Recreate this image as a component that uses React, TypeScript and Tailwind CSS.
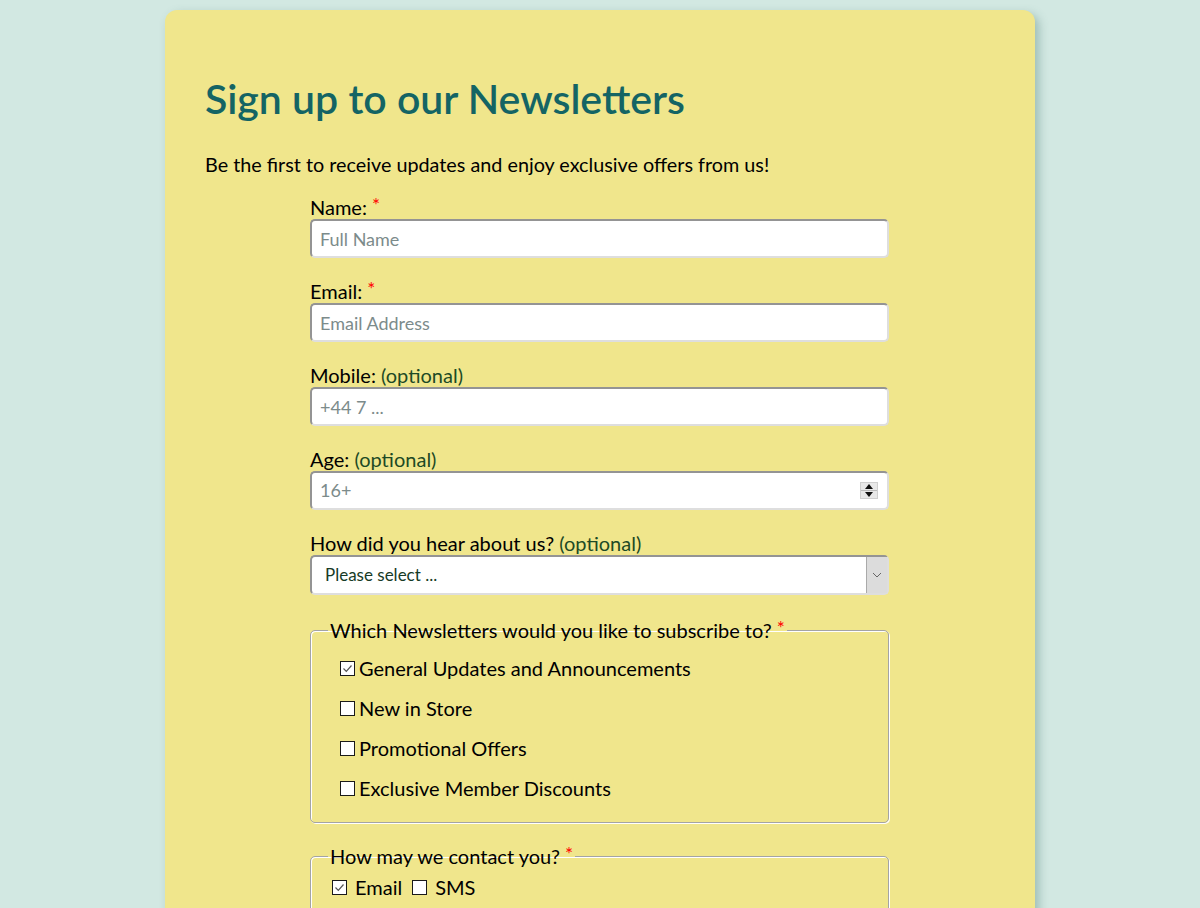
import React from "react";

const font = { fontFamily: "Lato, 'Noto Sans', sans-serif" };

function Req() {
  return <span className="relative -top-[3px] ml-[5px] text-[19px] leading-none text-[#ff0000]">*</span>;
}

function Optional() {
  return <span className="text-[#1d4a25]"> (optional)</span>;
}

function Box({ checked }: { checked?: boolean }) {
  return (
    <span className="inline-flex h-[15px] w-[15px] shrink-0 items-center justify-center border border-[#1a1a1a] bg-white">
      {checked && (
        <svg width="11" height="11" viewBox="0 0 11 11">
          <path d="M1.5 5.5 L4.3 8.3 L9.5 2.5" fill="none" stroke="#555" strokeWidth="1.2" />
        </svg>
      )}
    </span>
  );
}

const fieldClass =
  "h-[39px] w-full rounded-[5px] border-2 border-t-[#949494] border-l-[#949494] border-r-[#dedede] border-b-[#dedede] bg-white px-[8px] text-[18px] text-[#222] outline-none placeholder:text-[#7c8b8b]";

const labelClass = "block h-[24px] text-[20px] leading-[24px]";

const setClass =
  "rounded-[5px] border border-[#a4a4a4] shadow-[inset_1px_1px_0_#ffffff,1px_1px_0_#ffffff]";

function TextField({ label, placeholder, required }: { label: string; placeholder: string; required?: boolean }) {
  return (
    <div className="mb-[21px]">
      <label className={labelClass}>
        {label}
        {required ? <Req /> : <Optional />}
      </label>
      <input className={fieldClass} style={font} placeholder={placeholder} />
    </div>
  );
}

export default function App() {
  return (
    <div className="min-h-[908px] bg-[#d2e8e2] pt-[10px]" style={font}>
      <div className="mx-auto w-[870px] rounded-t-[12px] bg-[#f0e68c] px-[40px] pt-[65px] pb-10 text-black shadow-[4px_4px_10px_rgba(60,110,100,0.35)]">
        <h1 className="text-[41px] font-semibold leading-[48px] text-[#146464]">Sign up to our Newsletters</h1>
        <p className="mt-[29px] text-[19.8px] leading-[24px]">
          Be the first to receive updates and enjoy exclusive offers from us!
        </p>

        <form className="mt-[19px] ml-[105px] w-[579px]">
          <TextField label="Name:" placeholder="Full Name" required />
          <TextField label="Email:" placeholder="Email Address" required />
          <TextField label="Mobile:" placeholder="+44 7 ..." />

          <div className="mb-[21px]">
            <label className={labelClass}>
              Age:
              <Optional />
            </label>
            <div className={`${fieldClass} flex items-center justify-between`}>
              <span className="text-[18px] text-[#7c8b8b]">16+</span>
              <span className="mr-[1px] flex h-[17px] w-[18px] flex-col border border-[#cfcfcf] bg-[#e8e8e8]">
                <span className="flex flex-1 items-center justify-center border-b border-[#bbb]">
                  <svg width="8" height="5" viewBox="0 0 8 5"><path d="M0 5 L4 0 L8 5 Z" fill="#111" /></svg>
                </span>
                <span className="flex flex-1 items-center justify-center">
                  <svg width="8" height="5" viewBox="0 0 8 5"><path d="M0 0 L4 5 L8 0 Z" fill="#111" /></svg>
                </span>
              </span>
            </div>
          </div>

          <div className="mb-[23px]">
            <label className={labelClass}>
              How did you hear about us?
              <Optional />
            </label>
            <div className="flex h-[40px] w-full items-stretch rounded-[5px] border-2 border-t-[#949494] border-l-[#949494] border-r-[#dedede] border-b-[#dedede] bg-white">
              <span className="flex flex-1 items-center pl-[13px] text-[17px] text-[#173a26]">Please select ...</span>
              <span className="flex w-[21px] items-center justify-center border-l border-[#aaa] bg-[#dcdcdc]">
                <svg width="10" height="6" viewBox="0 0 10 6"><path d="M1 1 L5 5 L9 1" fill="none" stroke="#666" strokeWidth="1" /></svg>
              </span>
            </div>
          </div>

          <fieldset className={`mb-[21px] pb-[22px] ${setClass}`}>
            <legend className="ml-[17px] px-[2px] text-[20px] leading-[24px]">
              Which Newsletters would you like to subscribe to?
              <Req />
            </legend>
            <div className="flex flex-col gap-[16px] px-[29px] pt-[14px] text-[20px] leading-[24px]">
              {[
                ["General Updates and Announcements", true],
                ["New in Store", false],
                ["Promotional Offers", false],
                ["Exclusive Member Discounts", false],
              ].map(([t, c]) => (
                <label key={t as string} className="flex items-center gap-[4px]">
                  <Box checked={c as boolean} />
                  {t as string}
                </label>
              ))}
            </div>
          </fieldset>

          <fieldset className={`pb-[22px] ${setClass}`}>
            <legend className="ml-[17px] px-[2px] text-[20px] leading-[24px]">
              How may we contact you?
              <Req />
            </legend>
            <div className="flex items-center px-[21px] pt-[7px] text-[20px] leading-[24px]">
              <label className="flex items-center gap-[8px]">
                <Box checked />
                Email
              </label>
              <label className="ml-[10px] flex items-center gap-[8px]">
                <Box />
                SMS
              </label>
            </div>
          </fieldset>
        </form>
      </div>
    </div>
  );
}
